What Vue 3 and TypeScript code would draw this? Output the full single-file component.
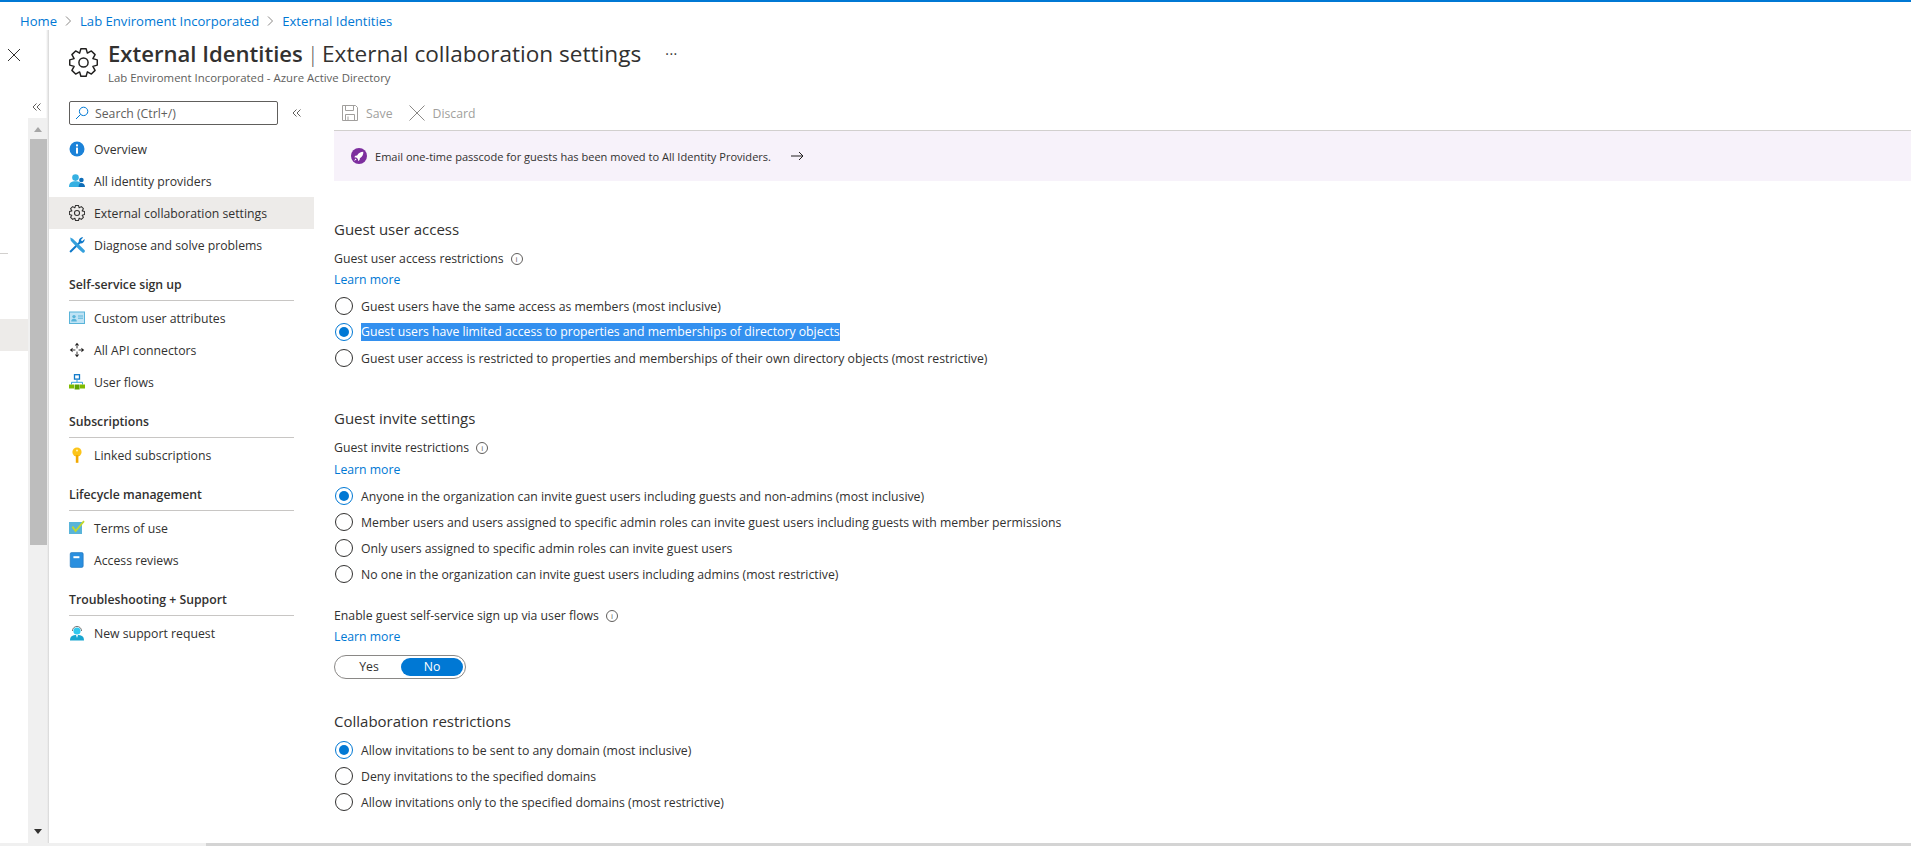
<script setup lang="ts">
// External Identities blade: static copy of the Azure portal settings page
type NavItem = { label: string; icon: string; active?: boolean }
type NavGroup = { title?: string; items: NavItem[] }

const crumbs = ['Home', 'Lab Enviroment Incorporated', 'External Identities']

const navGroups: NavGroup[] = [
  {
    items: [
      { label: 'Overview', icon: 'info' },
      { label: 'All identity providers', icon: 'people' },
      { label: 'External collaboration settings', icon: 'gear', active: true },
      { label: 'Diagnose and solve problems', icon: 'tools' },
    ],
  },
  {
    title: 'Self-service sign up',
    items: [
      { label: 'Custom user attributes', icon: 'card' },
      { label: 'All API connectors', icon: 'move' },
      { label: 'User flows', icon: 'flow' },
    ],
  },
  { title: 'Subscriptions', items: [{ label: 'Linked subscriptions', icon: 'key' }] },
  {
    title: 'Lifecycle management',
    items: [
      { label: 'Terms of use', icon: 'terms' },
      { label: 'Access reviews', icon: 'book' },
    ],
  },
  { title: 'Troubleshooting + Support', items: [{ label: 'New support request', icon: 'support' }] },
]

const accessOptions = [
  'Guest users have the same access as members (most inclusive)',
  'Guest users have limited access to properties and memberships of directory objects',
  'Guest user access is restricted to properties and memberships of their own directory objects (most restrictive)',
]
const inviteOptions = [
  'Anyone in the organization can invite guest users including guests and non-admins (most inclusive)',
  'Member users and users assigned to specific admin roles can invite guest users including guests with member permissions',
  'Only users assigned to specific admin roles can invite guest users',
  'No one in the organization can invite guest users including admins (most restrictive)',
]
const domainOptions = [
  'Allow invitations to be sent to any domain (most inclusive)',
  'Deny invitations to the specified domains',
  'Allow invitations only to the specified domains (most restrictive)',
]

// builds a cog outline, teeth around a centre of 12,12 on a 24 box
function gearPath(teeth: number, outer: number, inner: number): string {
  const pts: string[] = []
  const step = (Math.PI * 2) / teeth
  for (let i = 0; i < teeth; i++) {
    const a = i * step
    const offsets: [number, number][] = [
      [-0.5, inner],
      [-0.24, outer],
      [0.24, outer],
      [0.5, inner],
    ]
    for (const [o, r] of offsets) {
      const t = a + o * step
      pts.push(`${(12 + Math.cos(t) * r).toFixed(2)} ${(12 + Math.sin(t) * r).toFixed(2)}`)
    }
  }
  return `M${pts.join('L')}Z`
}
const gear = gearPath(8, 11.6, 8.4)
</script>

<template>
  <div class="page">
    <nav class="crumbs">
      <template v-for="(c, i) in crumbs" :key="c">
        <svg v-if="i > 0" class="chev" width="7" height="10" viewBox="0 0 7 10">
          <path d="M1 .5 5.500 5 1 9.500" fill="none" stroke="#8a8886" />
        </svg>
        <a>{{ c }}</a>
      </template>
    </nav>

    <div class="workspace">
      <aside class="rail">
        <div class="rail-left">
          <svg class="rail-close" width="14" height="14" viewBox="0 0 14 14">
            <path d="M1 1 13 13M13 1 1 13" stroke="#323130" stroke-width="1" fill="none" />
          </svg>
          <span class="rail-stub"></span>
          <span class="rail-selected"></span>
        </div>
        <div class="rail-right">
          <div class="rail-collapse">
            <svg width="8" height="8" viewBox="0 0 8 8" fill="none" stroke="#605e5c">
              <path d="M3.500.5 0 4l3.500 3.500M7.500.5 4 4l3.500 3.500" />
            </svg>
          </div>
          <div class="vscroll">
            <i class="arrow up"></i>
            <div class="thumb"></div>
            <i class="arrow down"></i>
          </div>
        </div>
      </aside>

      <section class="blade">
        <header class="blade-head">
          <svg class="head-gear" width="29" height="29" viewBox="0 0 24 24" fill="none" stroke="#201f1e" stroke-width="1.2">
            <path :d="gear" stroke-linejoin="round" />
            <circle cx="12" cy="12" r="3.800" />
          </svg>
          <div class="head-text">
            <h1><b>External Identities</b><span class="pipe">|</span>External collaboration settings</h1>
            <p>Lab Enviroment Incorporated - Azure Active Directory</p>
          </div>
          <span class="more">···</span>
        </header>

        <div class="blade-body">
          <div class="menu">
            <div class="search-row">
              <label class="search">
                <svg width="14" height="14" viewBox="0 0 14 14" fill="none" stroke="#0078d4">
                  <circle cx="8.600" cy="5.400" r="4.200" />
                  <path d="M5.600 8.400 1 13" />
                </svg>
                <span>Search (Ctrl+/)</span>
              </label>
              <svg class="collapse" width="8" height="8" viewBox="0 0 8 8" fill="none" stroke="#605e5c">
                <path d="M3.500.5 0 4l3.500 3.500M7.500.5 4 4l3.500 3.500" />
              </svg>
            </div>

            <div v-for="group in navGroups" :key="group.title ?? 'top'" class="group">
              <h3 v-if="group.title">{{ group.title }}</h3>
              <a v-for="item in group.items" :key="item.label" class="item" :class="{ active: item.active }">
                <svg class="nav-icon" width="16" height="16" viewBox="0 0 16 16">
                  <template v-if="item.icon === 'info'">
                    <circle cx="8" cy="8" r="7.500" fill="#1b82d8" />
                    <rect x="7" y="6.600" width="2" height="6" fill="#fff" />
                    <rect x="7" y="3.400" width="2" height="2" fill="#fff" />
                  </template>
                  <template v-else-if="item.icon === 'people'">
                    <circle cx="6.500" cy="4.600" r="3.300" fill="#35b0e2" />
                    <path d="M0 14c0-4.200 2.400-5.800 6.500-5.800S13 9.800 13 14z" fill="#35b0e2" />
                    <circle cx="12.400" cy="7" r="2.300" fill="#0e6db8" />
                    <path d="M9.600 14c0-2.800 1-4 2.800-4S16 11.200 16 14z" fill="#0e6db8" />
                  </template>
                  <template v-else-if="item.icon === 'gear'">
                    <g transform="scale(.667)" fill="none" stroke="#323130" stroke-width="1.600">
                      <path :d="gear" stroke-linejoin="round" />
                      <circle cx="12" cy="12" r="3.800" />
                    </g>
                  </template>
                  <template v-else-if="item.icon === 'tools'">
                    <path d="M1.800 15.800 .4 14.200 9.800 5a4 4 0 0 1 4.400-4.600L11.800 2.900l1.300 1.400 2.500-2.400A4 4 0 0 1 11.200 6.400z" fill="#0f79c9" />
                    <path d="M1.200.5 3.800 1.800 12.400 10l3 3a1.500 1.500 0 0 1-2.200 2.200L10 12.400 1.800 3.800z" fill="#35a0dc" />
                  </template>
                  <template v-else-if="item.icon === 'card'">
                    <rect x=".5" y="2" width="15" height="11.500" fill="#bfe3f5" stroke="#59b4d9" />
                    <circle cx="5" cy="6.600" r="1.700" fill="#59b4d9" />
                    <path d="M2.200 11.600c0-2 1-2.800 2.800-2.800s2.800.8 2.800 2.800z" fill="#59b4d9" />
                    <path d="M9 6h5M9 8.200h5" stroke="#59b4d9" />
                  </template>
                  <template v-else-if="item.icon === 'move'">
                    <path d="M8 4v2.400M8 9.600V12M4 8h2.400M9.600 8H12" stroke="#323130" />
                    <path d="M8 .8 10.200 3.600H5.800zM8 15.200 5.800 12.400h4.400zM.8 8 3.600 5.800v4.400zM15.200 8 12.400 10.200V5.800z" fill="#201f1e" />
                  </template>
                  <template v-else-if="item.icon === 'flow'">
                    <rect x="5.500" y=".7" width="5" height="4.400" fill="#fff" stroke="#0f79c9" stroke-width="1.300" />
                    <path d="M8 5v3.500M2.500 10.500V8.300h11v2.200" fill="none" stroke="#3aa0dc" />
                    <rect x="0" y="10.500" width="5" height="4" fill="#7fba00" />
                    <rect x="5.600" y="10.500" width="5" height="5" fill="#5ea300" />
                    <rect x="11" y="10.500" width="5" height="4" fill="#7fba00" />
                  </template>
                  <template v-else-if="item.icon === 'key'">
                    <circle cx="8" cy="5" r="4.600" fill="#fcc419" />
                    <rect x="6.800" y="8" width="2.600" height="7.800" fill="#f2a900" />
                    <circle cx="8" cy="3.400" r="1" fill="#fff3bf" />
                  </template>
                  <template v-else-if="item.icon === 'terms'">
                    <rect x="0" y="2" width="13" height="12" fill="#59b4d9" />
                    <path d="M3.400 6.600 6.600 11 15 1.200" fill="none" stroke="#c2d82c" stroke-width="1.800" />
                  </template>
                  <template v-else-if="item.icon === 'book'">
                    <rect x="1.200" y=".6" width="13" height="14.800" rx="1.400" fill="#2a8fdf" stroke="#1a70b8" stroke-width=".6" />
                    <rect x="4.400" y="4.200" width="6" height="2" fill="#fff" />
                  </template>
                  <template v-else>
                    <path d="M3.400 6A4.600 4.600 0 0 1 12.600 6" fill="none" stroke="#7a7a7a" />
                    <circle cx="8" cy="6" r="3.600" fill="#32c8ee" />
                    <path d="M1 15.600c0-4 2-5.600 7-5.600s7 1.600 7 5.600z" fill="#18a6d0" />
                    <path d="M7 10h2l-1 3z" fill="#fff" />
                  </template>
                </svg>
                <span>{{ item.label }}</span>
              </a>
            </div>
          </div>

          <main class="content">
            <div class="toolbar">
              <button class="tool" type="button">
                <svg width="16" height="16" viewBox="0 0 16 16" fill="none" stroke="#a19f9d">
                  <path d="M.5.5h13l2 2v13H.5z" />
                  <path d="M3.500.5v5h8v-5M3.500 15.500v-6h9v6M6 11.500v4" />
                </svg>
                Save
              </button>
              <button class="tool" type="button">
                <svg width="16" height="16" viewBox="0 0 16 16" fill="none" stroke="#8a8886">
                  <path d="M.5.5 15.500 15.500M15.500.5.5 15.500" />
                </svg>
                Discard
              </button>
            </div>

            <div class="banner">
              <svg width="16" height="16" viewBox="0 0 16 16">
                <circle cx="8" cy="8" r="8" fill="#7d2e9e" />
                <path d="M12.300 3.700c-2.700.1-4.700 1.300-6.200 3.700l-1.800.3-1 1.500 2 .2 1.600 1.600.2 2 1.500-1 .3-1.800c2.400-1.500 3.600-3.500 3.400-6.500z" fill="#fff" />
                <path d="M4.500 10.500 3 13l2.500-1.500z" fill="#fff" />
              </svg>
              <span>Email one-time passcode for guests has been moved to All Identity Providers.</span>
              <svg width="13" height="10" viewBox="0 0 13 10" fill="none" stroke="#201f1e">
                <path d="M0 5h12M8 1l4 4-4 4" />
              </svg>
            </div>

            <h2 class="first">Guest user access</h2>
            <div class="field-label">
              Guest user access restrictions
              <span class="tip">i</span>
            </div>
            <a class="learn">Learn more</a>
            <div class="radios">
              <label v-for="(o, i) in accessOptions" :key="o" class="radio">
                <span class="dot" :class="{ on: i === 1 }"></span>
                <span :class="{ hl: i === 1 }">{{ o }}</span>
              </label>
            </div>

            <h2 class="invite">Guest invite settings</h2>
            <div class="field-label">
              Guest invite restrictions
              <span class="tip">i</span>
            </div>
            <a class="learn wide">Learn more</a>
            <div class="radios">
              <label v-for="(o, i) in inviteOptions" :key="o" class="radio">
                <span class="dot" :class="{ on: i === 0 }"></span>
                <span>{{ o }}</span>
              </label>
            </div>

            <div class="field-label self-service">
              Enable guest self-service sign up via user flows
              <span class="tip">i</span>
            </div>
            <a class="learn">Learn more</a>
            <div class="toggle">
              <span>Yes</span>
              <span class="sel">No</span>
            </div>

            <h2 class="collab">Collaboration restrictions</h2>
            <div class="radios tight">
              <label v-for="(o, i) in domainOptions" :key="o" class="radio">
                <span class="dot" :class="{ on: i === 0 }"></span>
                <span>{{ o }}</span>
              </label>
            </div>
          </main>
        </div>
      </section>
    </div>

    <div class="hscroll"><div class="hthumb"></div></div>
  </div>
</template>

<style>
html,
body {
  margin: 0;
  overflow: hidden;
  background: #fff;
}
</style>

<style scoped>
.page {
  height: 846px;
  display: flex;
  flex-direction: column;
  box-sizing: border-box;
  border-top: 2px solid #0078d4;
  font-family: 'Open Sans', 'Noto Sans', sans-serif;
  font-size: 12.25px;
  color: #323130;
  overflow: hidden;
}
.crumbs {
  height: 28px;
  flex: none;
  display: flex;
  align-items: center;
  padding: 10px 0 0 20px;
  box-sizing: border-box;
  gap: 8px;
  color: #0078d4;
  font-size: 13.1px;
}
.chev {
  flex: none;
}
.workspace {
  flex: 1;
  min-height: 0;
  display: flex;
}
.rail {
  width: 49px;
  flex: none;
  display: flex;
}
.rail-left {
  width: 28px;
  flex: none;
  display: flex;
  flex-direction: column;
}
.rail-close {
  margin: 18px 0 0 7px;
}
.rail-stub {
  display: block;
  width: 8px;
  height: 1px;
  background: #d2d0ce;
  margin-top: 191px;
}
.rail-selected {
  display: block;
  height: 32px;
  background: #edebe9;
  margin-top: 65px;
}
.rail-right {
  width: 21px;
  display: flex;
  flex-direction: column;
  background: linear-gradient(to left, #d6d6d6, #fff 3px);
}
.rail-collapse {
  height: 88px;
  box-sizing: border-box;
  padding: 73px 0 0 5px;
  line-height: 0;
}
.vscroll {
  flex: 1;
  background: #f0f0f0;
  width: 19px;
  display: flex;
  flex-direction: column;
  align-items: center;
  justify-content: space-between;
  position: relative;
}
.arrow {
  width: 0;
  height: 0;
  border-left: 4.500px solid transparent;
  border-right: 4.500px solid transparent;
  display: block;
}
.arrow.up {
  border-bottom: 5px solid #a6a6a6;
  margin-top: 9px;
}
.arrow.down {
  border-top: 5px solid #323130;
  margin-bottom: 9px;
}
.thumb {
  position: absolute;
  top: 21px;
  left: 2px;
  right: 0;
  height: 406px;
  background: #bdbdbd;
}
.blade {
  flex: 1;
  min-width: 0;
  display: flex;
  flex-direction: column;
  background: #fff;
}
.blade-head {
  height: 71px;
  flex: none;
  box-sizing: border-box;
  padding: 6px 0 0 20px;
  display: flex;
  align-items: flex-start;
}
.head-gear {
  margin: 12px 10px 0 0;
  flex: none;
}
.head-text h1 {
  margin: 0;
  font-size: 22.6px;
  font-weight: 400;
  line-height: 34px;
  white-space: nowrap;
}
.head-text b {
  font-weight: 600;
  font-size: 22.1px;
}
.pipe {
  font-weight: 300;
  color: #605e5c;
  margin: 0 3px 0 4px;
}
.head-text p {
  margin: 0;
  font-size: 11.4px;
  line-height: 14px;
  color: #605e5c;
}
.more {
  margin: 8px 0 0 24px;
  font-size: 14px;
  line-height: 20px;
  letter-spacing: 0.5px;
  color: #323130;
}
.blade-body {
  flex: 1;
  min-height: 0;
  display: flex;
}
.menu {
  width: 265px;
  flex: none;
}
.search-row {
  display: flex;
  align-items: center;
  padding-left: 20px;
  height: 24px;
  margin-bottom: 8px;
}
.search {
  width: 209px;
  height: 24px;
  box-sizing: border-box;
  border: 1px solid #605e5c;
  border-radius: 2px;
  display: flex;
  align-items: center;
  gap: 6px;
  padding-left: 5px;
  color: #605e5c;
}
.collapse {
  margin-left: 15px;
}
.group h3 {
  margin: 8px 20px 1px;
  height: 32px;
  box-sizing: border-box;
  border-bottom: 1px solid #c8c6c4;
  font-size: 12.25px;
  line-height: 20px;
  font-weight: 600;
  display: flex;
  align-items: center;
}
.item {
  height: 32px;
  display: flex;
  align-items: center;
  padding-left: 20px;
  gap: 9px;
  white-space: nowrap;
}
.item.active {
  background: #edebe9;
}
.nav-icon {
  flex: none;
}
.content {
  flex: 1;
  min-width: 0;
  padding-left: 20px;
}
.toolbar {
  height: 29px;
  display: flex;
  align-items: flex-start;
  gap: 16px;
  padding-left: 8px;
  border-bottom: 1px solid #d2d0ce;
}
.tool {
  border: 0;
  background: none;
  padding: 0;
  height: 24px;
  font: inherit;
  color: #a19f9d;
  display: flex;
  align-items: center;
  gap: 8px;
}
.banner {
  height: 50px;
  background: #f7f2fa;
  display: flex;
  align-items: center;
  padding-left: 17px;
  gap: 8px;
  font-size: 11.05px;
}
.banner svg:last-child {
  margin-left: 12px;
}
h2 {
  margin: 36px 0 9px;
  font-size: 15px;
  font-weight: 400;
  line-height: 22px;
}
h2.first {
  margin: 37px 0 9px;
}
h2.collab {
  margin: 31px 0 5px;
}
.field-label {
  line-height: 20px;
  display: flex;
  align-items: center;
  gap: 7px;
}
.self-service {
  margin-top: 19px;
}
.learn {
  display: block;
  line-height: 20px;
  margin-top: 1px;
  color: #0078d4;
}
.learn.wide {
  margin-top: 2px;
}
.tip {
  width: 12px;
  height: 12px;
  box-sizing: border-box;
  border: 1px solid #605e5c;
  border-radius: 50%;
  font-size: 8px;
  line-height: 10px;
  text-align: center;
  color: #605e5c;
}
.radios {
  margin-top: 3px;
}
.radios.tight {
  margin-top: 0;
}
.radio {
  height: 26px;
  display: flex;
  align-items: center;
  gap: 8px;
  white-space: nowrap;
}
.dot {
  width: 18px;
  height: 18px;
  box-sizing: border-box;
  border: 1px solid #323130;
  border-radius: 50%;
  flex: none;
  margin-left: 1px;
  display: flex;
  align-items: center;
  justify-content: center;
}
.dot.on {
  border-color: #0078d4;
}
.dot.on::after {
  content: '';
  width: 10px;
  height: 10px;
  border-radius: 50%;
  background: #0078d4;
}
.hl {
  background: #3390ef;
  color: #fff;
  line-height: 18px;
}
.toggle {
  width: 132px;
  height: 24px;
  margin-top: 8px;
  box-sizing: border-box;
  border: 1px solid #8a8886;
  border-radius: 12px;
  padding: 2px;
  display: grid;
  grid-template-columns: 1fr 62px;
  text-align: center;
  line-height: 18px;
}
.toggle .sel {
  background: #0078d4;
  color: #fff;
  border-radius: 9px;
}
.hscroll {
  height: 3px;
  flex: none;
  background: #f0f0f0;
  padding-left: 206px;
}
.hthumb {
  height: 100%;
  background: #d4d4d4;
}
</style>
